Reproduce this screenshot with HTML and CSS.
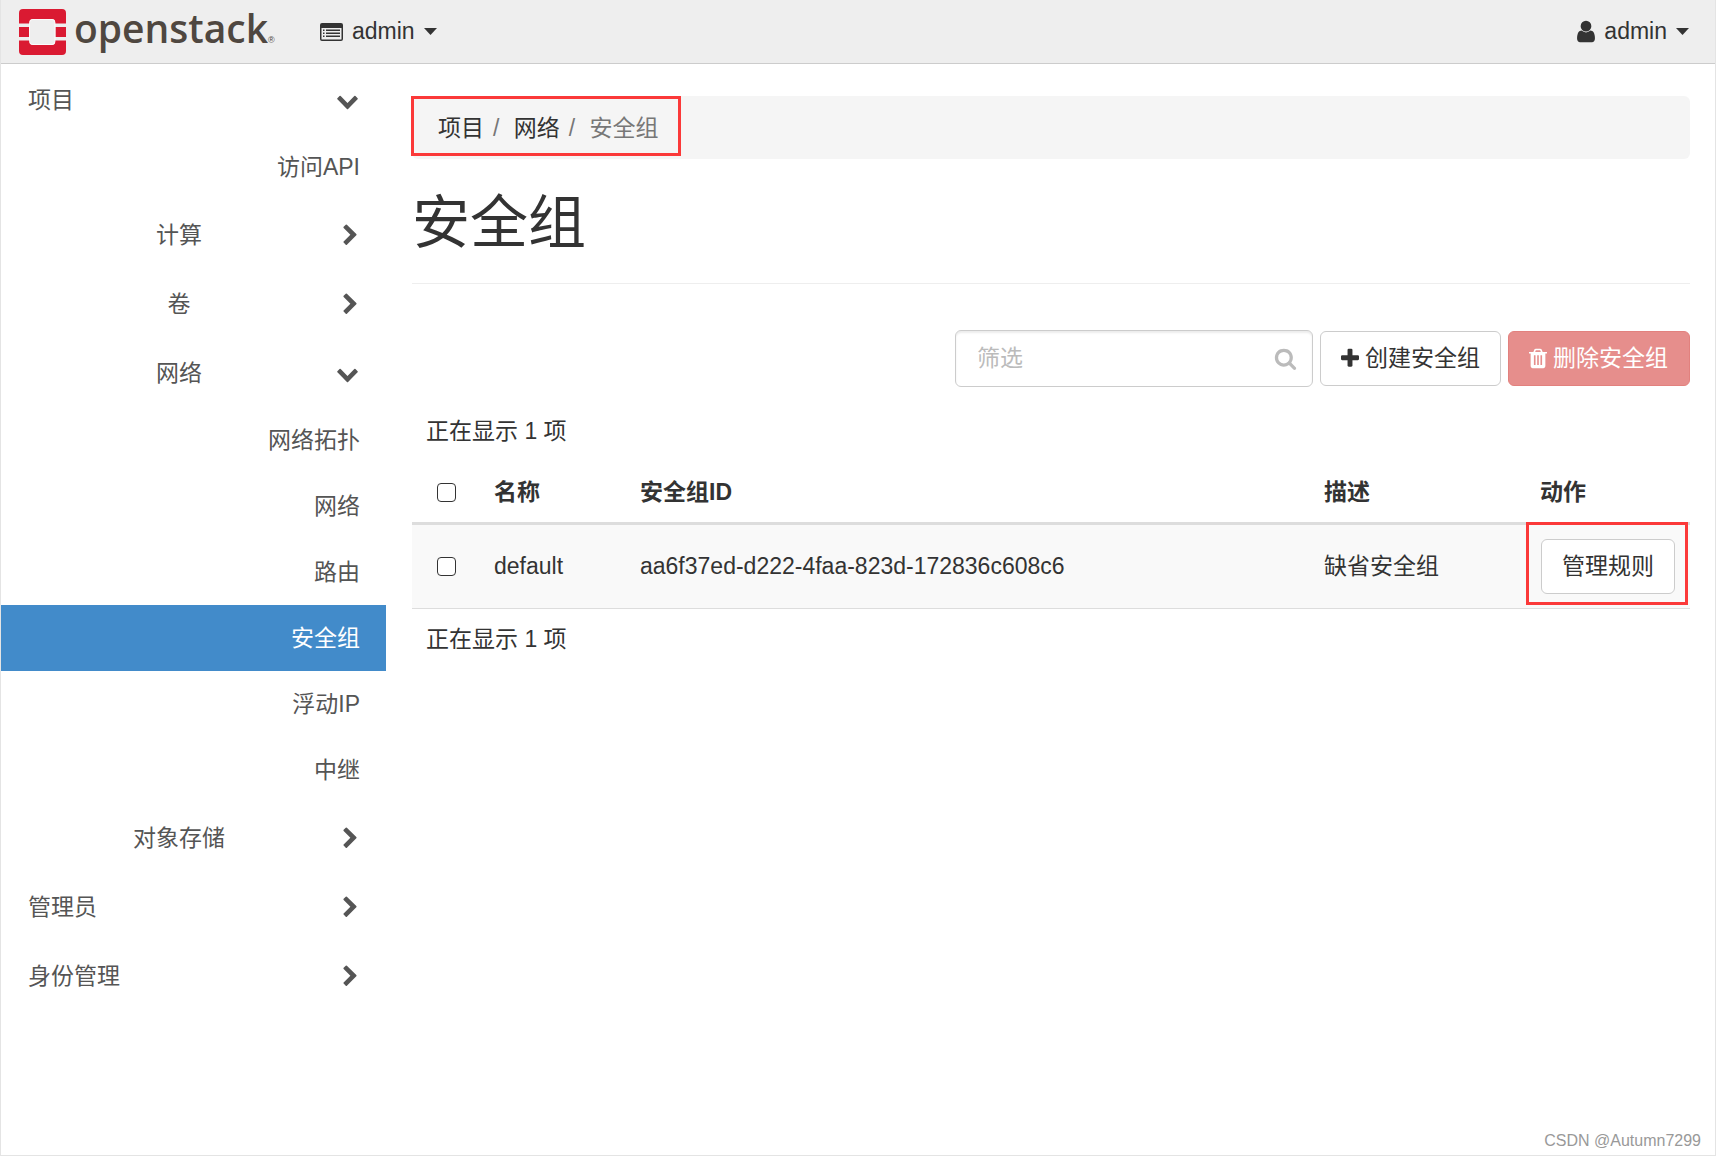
FILE: index.html
```html
<!DOCTYPE html>
<html lang="zh-CN">
<head>
<meta charset="utf-8">
<title>安全组 - OpenStack Dashboard</title>
<link rel="stylesheet" href="styles.css">
</head>
<body>
<svg class="sprite" aria-hidden="true">
  <symbol id="caret" viewBox="0 0 13 7"><path d="M0 0h13L6.500 7z"/></symbol>
  <symbol id="right" viewBox="0 0 1574 1792"><path d="M1363 877l-742 742q-19 19-45 19t-45-19l-166-166q-19-19-19-45t19-45l531-531-531-531q-19-19-19-45t19-45l166-166q19-19 45-19t45 19l742 742q19 19 19 45t-19 45z"/></symbol>
  <symbol id="down" viewBox="0 0 1792 1792"><path d="M1683 808l-742 741q-19 19-45 19t-45-19l-742-741q-19-19-19-45.500t19-45.500l166-165q19-19 45-19t45 19l531 531 531-531q19-19 45-19t45 19l166 165q19 19 19 45.500t-19 45.500z"/></symbol>
</svg>

<header class="topbar">
  <a class="brand" href="#" aria-label="openstack">
    <svg class="brand-mark" viewBox="0 0 47 46" aria-hidden="true">
      <g fill="#da1a32">
        <path d="M4 0h39a4 4 0 0 1 4 4v10.500H36V13a3 3 0 0 0-3-3H14a3 3 0 0 0-3 3v1.500H0V4a4 4 0 0 1 4-4z"/>
        <path d="M0 18h10v10H0zM36.500 18H47v10H36.500z"/>
        <path d="M4 46h39a4 4 0 0 0 4-4V31.500H36V33a3 3 0 0 1-3 3H14a3 3 0 0 1-3-3v-1.500H0V42a4 4 0 0 0 4 4z"/>
      </g>
      <rect x="10.500" y="10.500" width="25.500" height="25" rx="3" fill="#eee" stroke="#fff" stroke-width=".8"/>
    </svg>
    <span class="brand-name">openstack</span><span class="brand-reg">®</span>
  </a>
  <button class="menu" type="button">
    <svg class="icon-list" viewBox="0 0 23 18" aria-hidden="true">
      <path fill-rule="evenodd" d="M2 0h19a2 2 0 0 1 2 2v14a2 2 0 0 1-2 2H2a2 2 0 0 1-2-2V2a2 2 0 0 1 2-2zM1.500 5v11q0 .6.600.600h18.800q.6 0 .6-.6V5z"/>
      <path d="M3 6.500h1.500V8H3zM6 6.500h14V8H6zM3 9.500h1.500V11H3zM6 9.500h14V11H6zM3 12.500h1.500V14H3zM6 12.500h14V14H6z"/>
    </svg>
    <span>admin</span>
    <svg class="caret" aria-hidden="true"><use href="#caret"/></svg>
  </button>
  <button class="menu menu-user" type="button">
    <svg class="icon-user" viewBox="256 0 1280 1792" aria-hidden="true"><path d="M1536 1399q0 109-62.500 187t-150.500 78h-854q-88 0-150.500-78t-62.500-187q0-85 8.500-160.500t31.500-152 58.500-131 94-89 134.500-34.500q131 128 313 128t313-128q76 0 134.500 34.500t94 89 58.500 131 31.500 152 8.500 160.500zm-256-887q0 159-112.500 271.500t-271.500 112.500-271.500-112.500-112.500-271.500 112.500-271.500 271.500-112.500 271.500 112.500 112.500 271.500z"/></svg>
    <span>admin</span>
    <svg class="caret" aria-hidden="true"><use href="#caret"/></svg>
  </button>
</header>

<div class="layout">
  <nav class="sidebar">
    <a class="group" href="#"><span>项目</span><svg class="chev-down"><use href="#down"/></svg></a>
    <a class="leaf" href="#">访问API</a>
    <a class="group sub" href="#"><span>计算</span><svg class="chev-right"><use href="#right"/></svg></a>
    <a class="group sub" href="#"><span>卷</span><svg class="chev-right"><use href="#right"/></svg></a>
    <a class="group sub" href="#"><span>网络</span><svg class="chev-down"><use href="#down"/></svg></a>
    <a class="leaf" href="#">网络拓扑</a>
    <a class="leaf" href="#">网络</a>
    <a class="leaf" href="#">路由</a>
    <a class="leaf active" href="#">安全组</a>
    <a class="leaf" href="#">浮动IP</a>
    <a class="leaf" href="#">中继</a>
    <a class="group sub" href="#"><span>对象存储</span><svg class="chev-right"><use href="#right"/></svg></a>
    <a class="group" href="#"><span>管理员</span><svg class="chev-right"><use href="#right"/></svg></a>
    <a class="group" href="#"><span>身份管理</span><svg class="chev-right"><use href="#right"/></svg></a>
  </nav>

  <main class="content">
    <div class="crumb-bar">
      <ol class="crumbs">
        <li><a href="#">项目</a></li>
        <li><a href="#">网络</a></li>
        <li>安全组</li>
      </ol>
    </div>
    <h1>安全组</h1>

    <div class="toolbar">
      <label class="filter">
        <input type="text" placeholder="筛选" aria-label="筛选">
        <svg class="icon-search" viewBox="0 0 1792 1792" aria-hidden="true"><path d="M1216 832q0-185-131.500-316.500t-316.500-131.500-316.500 131.500-131.500 316.500 131.500 316.500 316.500 131.500 316.500-131.500 131.500-316.500zm512 832q0 52-38 90t-90 38q-54 0-90-38l-343-342q-179 124-399 124-143 0-273.500-55.500t-225-150-150-225-55.500-273.500 55.500-273.500 150-225 225-150 273.500-55.500 273.500 55.500 225 150 150 225 55.500 273.500q0 220-124 399l343 343q37 37 37 90z"/></svg>
      </label>
      <button class="btn" type="button">
        <svg class="icon-btn" viewBox="192 0 1408 1792" aria-hidden="true"><path d="M1600 736v192q0 40-28 68t-68 28h-416v416q0 40-28 68t-68 28h-192q-40 0-68-28t-28-68v-416h-416q-40 0-68-28t-28-68v-192q0-40 28-68t68-28h416v-416q0-40 28-68t68-28h192q40 0 68 28t28 68v416h416q40 0 68 28t28 68z"/></svg>
        <span>创建安全组</span>
      </button>
      <button class="btn btn-danger" type="button" disabled>
        <svg class="icon-btn" viewBox="192 0 1408 1792" aria-hidden="true"><path d="M704 1376v-704q0-14-9-23t-23-9h-64q-14 0-23 9t-9 23v704q0 14 9 23t23 9h64q14 0 23-9t9-23zm256 0v-704q0-14-9-23t-23-9h-64q-14 0-23 9t-9 23v704q0 14 9 23t23 9h64q14 0 23-9t9-23zm256 0v-704q0-14-9-23t-23-9h-64q-14 0-23 9t-9 23v704q0 14 9 23t23 9h64q14 0 23-9t9-23zm-544-992h448l-48-117q-7-9-17-11h-317q-10 2-17 11zm928 32v64q0 14-9 23t-23 9h-96v948q0 83-47 143.500t-113 60.500h-832q-66 0-113-58.500t-47-141.500v-952h-96q-14 0-23-9t-9-23v-64q0-14 9-23t23-9h309l70-167q15-37 54-63t79-26h320q40 0 79 26t54 63l70 167h309q14 0 23 9t9 23z"/></svg>
        <span>删除安全组</span>
      </button>
    </div>

    <p class="count">正在显示 1 项</p>
    <table class="grid">
      <colgroup><col class="c-check"><col class="c-name"><col><col class="c-desc"><col class="c-act"></colgroup>
      <thead>
        <tr><th class="check"><input type="checkbox" aria-label="全选"></th><th>名称</th><th>安全组ID</th><th>描述</th><th>动作</th></tr>
      </thead>
      <tbody>
        <tr><td class="check"><input type="checkbox" aria-label="选择 default"></td><td>default</td><td>aa6f37ed-d222-4faa-823d-172836c608c6</td><td>缺省安全组</td><td class="action"><button class="btn" type="button">管理规则</button></td></tr>
      </tbody>
    </table>
    <p class="count">正在显示 1 项</p>
  </main>
</div>
<div class="watermark">CSDN @Autumn7299</div>
</body>
</html>
```
FILE: styles.css
```css
* { box-sizing: border-box; }

body {
  margin: 0;
  min-height: 100vh;
  display: flex;
  flex-direction: column;
  position: relative;
  border: solid #e4e4e4;
  border-width: 0 1px 1px;
  background: #fff;
  color: #333;
  font: 23px/33px "Liberation Sans", "Noto Sans CJK SC", sans-serif;
}

a { color: inherit; text-decoration: none; }
button, input { font: inherit; color: inherit; }
svg { display: block; flex: none; fill: currentColor; }
.sprite { position: absolute; width: 0; height: 0; }

/* Top bar */
.topbar {
  display: flex;
  align-items: center;
  height: 64px;
  padding: 0 26px 0 18px;
  background: #eee;
  border-bottom: 1px solid #ccc;
}
.brand { display: flex; align-items: center; width: 301px; color: #4f4740; }
.brand-mark { width: 47px; height: 46px; margin-right: 8px; }
.brand-name { font: 600 39px/54px "Open Sans", sans-serif; padding-bottom: 8px; }
.brand-reg { font-size: 9px; line-height: 9px; padding-top: 17px; }
.menu {
  display: flex;
  align-items: center;
  gap: 9px;
  padding: 0;
  border: 0;
  background: none;
  line-height: 33px;
}
.menu-user { margin-left: auto; }
.icon-list { width: 23px; height: 18px; }
.icon-user { width: 18px; height: 25px; }
.caret { width: 13px; height: 7px; }

.layout { display: flex; flex: 1; }

/* Sidebar */
.sidebar { flex: none; width: 385px; padding-top: 1px; color: #555; }
.group, .leaf { display: flex; align-items: center; padding: 1px 26px 0 27px; }
.group { height: 69px; }
.group span { flex: 1; }
.group.sub span { text-align: center; }
.leaf { height: 66px; justify-content: flex-end; }
.active { background: #428bca; color: #fff; }
.chev-right, .chev-down { height: 23px; }
.chev-right { width: 20px; margin: 0 1px 0 9px; }
.chev-down { width: 23px; margin: 0 1px 0 6px; }

/* Content */
.content { flex: 1; min-width: 0; padding: 32px 25px 0 26px; }
.crumb-bar { background: #f5f5f5; border-radius: 6px; }
.crumbs {
  position: relative;
  display: inline-flex;
  height: 63px;
  align-items: center;
  margin: 0;
  padding: 2px 22px 0 26px;
  list-style: none;
  vertical-align: top;
  color: #777;
}
.crumbs a { color: #333; }
.crumbs li + li::before { content: "/\00a0"; padding: 0 8px 0 9px; }
.crumbs::after {
  content: "";
  position: absolute;
  inset: 0 0 3px -1px;
  border: 3px solid #fb3939;
}
h1 {
  margin: 32px 0 46px;
  padding-bottom: 28px;
  border-bottom: 1px solid #eee;
  font-size: 58px;
  line-height: 64px;
  font-weight: 400;
}

.toolbar { display: flex; justify-content: flex-end; align-items: center; gap: 7px; }
.filter { position: relative; width: 358px; }
.filter input {
  display: block;
  width: 100%;
  height: 57px;
  padding: 0 60px 0 21px;
  border: 1px solid #ccc;
  border-radius: 6px;
  background: #fff;
  box-shadow: inset 0 2px 2px rgba(0, 0, 0, .08);
}
.filter input::placeholder { color: #bbb; opacity: 1; }
.icon-search {
  position: absolute;
  right: 16px;
  top: 17px;
  width: 23px;
  height: 23px;
  color: #bbb;
}
.btn {
  display: inline-flex;
  align-items: center;
  gap: 6px;
  height: 55px;
  padding: 0 20px;
  border: 1px solid #ccc;
  border-radius: 6px;
  background: #fff;
  white-space: nowrap;
}
.btn-danger { padding-right: 21px; background: #d9534f; border-color: #d43f3a; color: #fff; opacity: .65; }
.icon-btn { width: 18px; height: 23px; }

.count { margin: 0; padding: 14px; }
.toolbar + .count { margin-top: 14px; }

.grid { width: 100%; border-collapse: separate; border-spacing: 0; table-layout: fixed; }
.c-check { width: 68px; }
.c-name { width: 146px; }
.c-desc { width: 216px; }
.c-act { width: 164px; }
.grid th, .grid td { padding: 0 14px; text-align: left; vertical-align: middle; }
.grid .check { padding-left: 25px; }
.grid th { height: 63px; border-bottom: 3px solid #ddd; }
.grid td { height: 84px; background: #f9f9f9; border-bottom: 1px solid #ddd; }
.grid input {
  appearance: none;
  display: block;
  width: 19px;
  height: 19px;
  margin: 0;
  border: 1px solid #333;
  border-radius: 4px;
  background: #fff;
}
.grid .btn { vertical-align: middle; }
.grid .action { position: relative; padding-left: 15px; }
.action::after {
  content: "";
  position: absolute;
  inset: -3px 2px 3px 0;
  border: 3px solid #fb3939;
  pointer-events: none;
}

.watermark {
  position: absolute;
  right: 14px;
  bottom: 4px;
  color: #999;
  font-size: 16px;
  line-height: 20px;
}
```
